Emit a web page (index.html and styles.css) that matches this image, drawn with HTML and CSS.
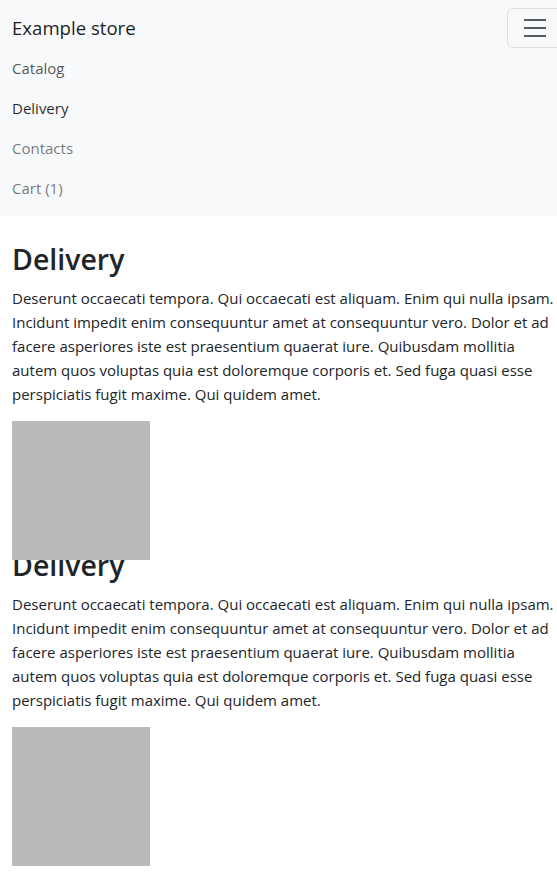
FILE: index.html
```html
<!DOCTYPE html>
<html lang="en">
<head>
<meta charset="utf-8">
<title>Example store</title>
<link rel="stylesheet" href="styles.css">
</head>
<body>
<div class="page">
  <nav class="navbar">
    <div class="navbar-top">
      <a class="brand" href="#">Example store</a>
      <button class="toggler" type="button" aria-label="Toggle navigation">
        <svg class="toggler-icon" viewBox="0 0 30 30" width="30" height="30"><path d="M4 7h22M4 15h22M4 23h22" stroke="rgba(33,37,41,0.75)" stroke-width="2"/></svg>
      </button>
    </div>
    <ul class="nav">
      <li><a class="nav-link focus" href="#">Catalog</a></li>
      <li><a class="nav-link active" href="#">Delivery</a></li>
      <li><a class="nav-link" href="#">Contacts</a></li>
      <li><a class="nav-link" href="#">Cart (1)</a></li>
    </ul>
  </nav>
  <main class="content">
    <section class="block">
      <h1 class="title">Delivery</h1>
      <p class="text">Deserunt occaecati tempora. Qui occaecati est aliquam. Enim qui nulla ipsam. Incidunt impedit enim consequuntur amet at consequuntur vero. Dolor et ad facere asperiores iste est praesentium quaerat iure. Quibusdam mollitia autem quos voluptas quia est doloremque corporis et. Sed fuga quasi esse perspiciatis fugit maxime. Qui quidem amet.</p>
      <div class="thumb"></div>
    </section>
    <section class="block">
      <h1 class="title">Delivery</h1>
      <p class="text">Deserunt occaecati tempora. Qui occaecati est aliquam. Enim qui nulla ipsam. Incidunt impedit enim consequuntur amet at consequuntur vero. Dolor et ad facere asperiores iste est praesentium quaerat iure. Quibusdam mollitia autem quos voluptas quia est doloremque corporis et. Sed fuga quasi esse perspiciatis fugit maxime. Qui quidem amet.</p>
      <div class="thumb"></div>
    </section>
  </main>
</div>
</body>
</html>
```
FILE: styles.css
```css
html {
  overflow-x: hidden;
}
body {
  margin: 0;
  padding: 0;
  background: #fff;
  font-family: "Open Sans", "Noto Sans", sans-serif;
  font-size: 15px;
  line-height: 24px;
  color: #212529;
}
.page {
  width: 575px;
  padding-bottom: 20px;
}
.navbar {
  background: #f8f9fa;
  padding: 8px 12px;
}
.navbar-top {
  display: flex;
  justify-content: space-between;
  align-items: center;
}
.brand {
  font-size: 18.6px;
  line-height: 30px;
  padding: 5px 0;
  color: rgba(0, 0, 0, 0.9);
  text-decoration: none;
}
.toggler {
  display: flex;
  align-items: center;
  justify-content: center;
  padding: 4px 12px;
  background: transparent;
  border: 1px solid rgba(0, 0, 0, 0.1);
  border-radius: 6px;
}
.toggler-icon {
  display: block;
}
.nav {
  list-style: none;
  margin: 0;
  padding: 0;
}
.nav-link {
  display: block;
  padding: 8px 0;
  color: rgba(0, 0, 0, 0.55);
  text-decoration: none;
}
.nav-link.focus {
  color: rgba(0, 0, 0, 0.68);
}
.nav-link.active {
  color: rgba(0, 0, 0, 0.85);
}
.content {
  padding: 25px 12px 0;
}
.title {
  margin: 0 0 8px;
  font-size: 28.5px;
  line-height: 36.5px;
  font-weight: 600;
}
.text {
  margin: 0 0 15px;
}
.thumb {
  position: relative;
  width: 138px;
  height: 139px;
  margin-bottom: -12.5px;
  background: #bababa;
}
```
